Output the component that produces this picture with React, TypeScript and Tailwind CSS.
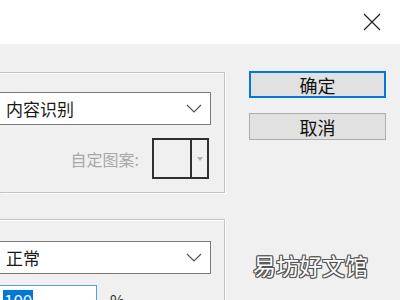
const font = "font-['Noto_Sans_CJK_SC','Noto_Sans',sans-serif]";

function Select({ label }: { label: string }) {
  return (
    <div className="h-[33px] w-[211px] bg-white border border-[#7a7a7a] border-l-0 flex items-center justify-between pl-[6px] pr-[8px]">
      <span className="text-[17px] text-[#1a1a1a] leading-none">{label}</span>
      <svg width="16" height="9" viewBox="0 0 16 9" className="text-[#555]">
        <path d="M1 1 L8 8 L15 1" fill="none" stroke="currentColor" strokeWidth="1.2" />
      </svg>
    </div>
  );
}

export default function App() {
  return (
    <div className={`relative w-[400px] h-[300px] overflow-hidden bg-[#f0f0f0] ${font}`}>
      {/* title bar */}
      <div className="h-[44px] bg-white flex items-center justify-end pr-[19px]">
        <svg width="18" height="18" viewBox="0 0 18 18" className="text-[#222]">
          <path d="M1 1 L17 17 M17 1 L1 17" stroke="currentColor" strokeWidth="1.2" />
        </svg>
      </div>

      <div className="flex">
        {/* left column */}
        <div className="w-[225px] pt-[28px]">
          <div className="h-[121px] border border-l-0 border-[#c4c4c4] shadow-[1px_1px_0_#fff,inset_0_1px_0_#fff] pt-[19px]">
            <Select label="内容识别" />
            <div className="flex items-center justify-end pr-[15px] mt-[13px]">
              <span className="text-[16px] text-[#a8a8a8] mr-[13px]">自定图案:</span>
              <div className="w-[57px] h-[41px] border-2 border-[#303030] flex">
                <div className="w-[38px] border-r-2 border-[#303030]" />
                <div className="flex-1 flex items-center justify-center">
                  <svg width="6" height="4" viewBox="0 0 6 4"><path d="M0 0 L6 0 L3 4 Z" fill="#b0b0b0" /></svg>
                </div>
              </div>
            </div>
          </div>

          <div className="mt-[26px] h-[100px] border border-l-0 border-b-0 border-[#c4c4c4] shadow-[1px_0_0_#fff,inset_0_1px_0_#fff] pt-[21px]">
            <Select label="正常" />
            <div className="flex items-center mt-[11px]">
              <div className="h-[30px] w-[97px] bg-white border border-l-0 border-[#5a9bd8] flex items-center pl-[3px]">
                <span className="bg-[#0078d7] text-white text-[17px] leading-[20px] px-[1px]">100</span>
              </div>
              <span className="ml-[13px] text-[16px] text-[#333]">%</span>
            </div>
          </div>
        </div>

        {/* buttons */}
        <div className="ml-[24px] pt-[27px] flex flex-col gap-[15px]">
          <button className="w-[137px] h-[27px] bg-[#e1e1e1] border-2 border-[#0078d7] text-[18px] leading-none text-[#111] flex items-center justify-center">
            确定
          </button>
          <button className="w-[137px] h-[27px] bg-[#e1e1e1] border border-[#adadad] text-[18px] leading-none text-[#111] flex items-center justify-center">
            取消
          </button>
        </div>
      </div>

      {/* watermark */}
      <div className="absolute left-[253px] top-[254px] text-[23px] leading-none text-white [text-shadow:1px_1px_0_#555,-1px_-1px_0_#555,1px_-1px_0_#555,-1px_1px_0_#555,0_1px_0_#555,0_-1px_0_#555,1px_0_0_#555,-1px_0_0_#555]">
        易坊好文馆
      </div>
    </div>
  );
}
